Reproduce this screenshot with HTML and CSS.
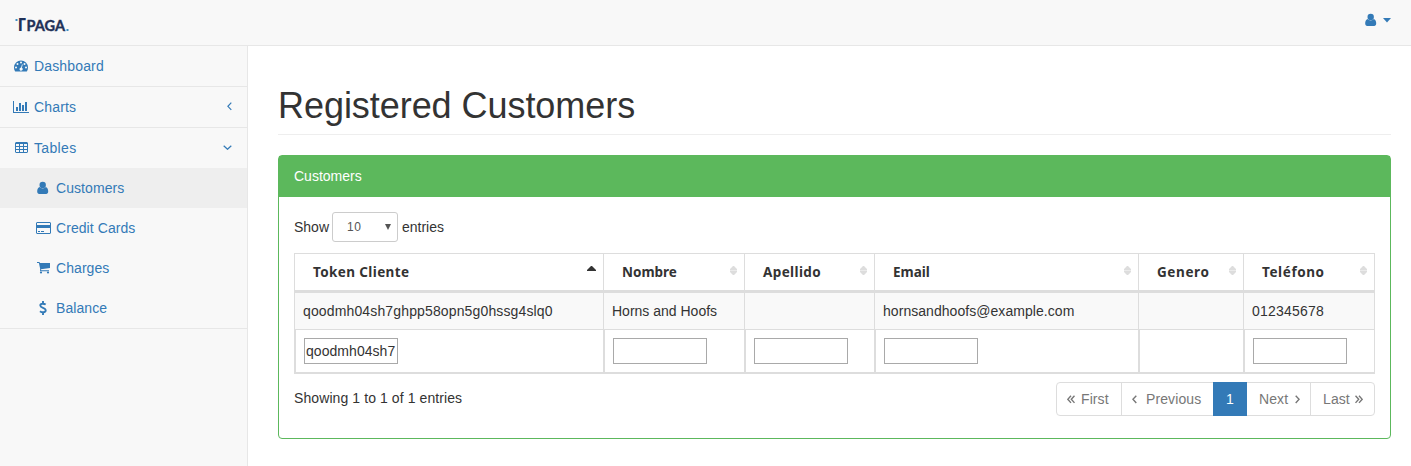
FILE: index.html
```html
<!DOCTYPE html>
<html lang="en">
<head>
<meta charset="utf-8">
<title>Registered Customers</title>
<link rel="stylesheet" href="styles.css">
</head>
<body>
<header class="navbar">
  <a class="brand">
    <svg width="60" height="20" viewBox="0 0 60 20">
      <rect x="0.5" y="3" width="2" height="2" fill="#3e8ec4"/>
      <text class="brand-t" x="2.400" y="15">Γ</text>
      <text class="brand-name" x="11.500" y="15" textLength="38.500" lengthAdjust="spacingAndGlyphs">PAGA</text>
      <rect x="51.500" y="13" width="2" height="2" fill="#3e8ec4"/>
    </svg>
  </a>
  <div class="user">
    <svg width="12" height="14" viewBox="0 0 12 14"><circle cx="5.700" cy="4" r="3.200"/><path d="M2.500 6C.8 6.600.2 8.300.2 10.600c0 1.500.8 2.400 2 2.400h7c1.200 0 2-.9 2-2.400 0-2.300-.6-4-2.300-4.600a4.400 4.400 0 0 1-6.400 0z"/></svg>
    <svg width="8" height="5" viewBox="0 0 8 5"><path d="M0 0h8L4 4.500z"/></svg>
  </div>
</header>
<div class="main">
  <nav class="sidebar">
    <a class="item"><span class="ico"><svg width="16" height="14" viewBox="0 0 16 14"><path fill-rule="evenodd" d="M8 1.500a7 7 0 0 0-7 7c0 1.400.3 2.600 1 3.700.2.300.4.300.6.300h10.800c.2 0 .4 0 .6-.3.700-1.100 1-2.300 1-3.700a7 7 0 0 0-7-7zM3 7.500a1 1 0 1 1 0 2 1 1 0 0 1 0-2zM4.500 4a1 1 0 1 1 0 2 1 1 0 0 1 0-2zM8 2.500a1 1 0 1 1 0 2 1 1 0 0 1 0-2zM11.500 4a1 1 0 1 1 0 2 1 1 0 0 1 0-2zM13 7.500a1 1 0 1 1 0 2 1 1 0 0 1 0-2zM9 5.300l.7.200-.8 3.200a1.600 1.600 0 1 1-.8-.2z"/></svg></span>Dashboard</a>
    <a class="item"><span class="ico"><svg width="16" height="12" viewBox="0 0 16 12"><path d="M0 0h1v11h15v1H0zM3 6h2v4H3zM6 2h2v8H6zM9 4h2v6H9zM12 1h2v9h-2z"/></svg></span>Charts<svg class="arrow" width="5" height="9" viewBox="0 0 5 9"><path d="M4.300.7.900 4.300l3.400 3.600"/></svg></a>
    <a class="item"><span class="ico"><svg class="grid" width="13" height="12" viewBox="0 0 13 12"><path fill-rule="evenodd" d="M1 0h11l1 1v9l-1 1H1l-1-1V1zM1 2v2h3V2zM5 2v2h3V2zM9 2v2h3V2zM1 5v2h3V5zM5 5v2h3V5zM9 5v2h3V5zM1 8v2h3V8zM5 8v2h3V8zM9 8v2h3V8z"/></svg></span>Tables<svg class="arrow" width="9" height="5" viewBox="0 0 9 5"><path d="M.7.700l3.800 3.600L8.300.7"/></svg></a>
    <div class="sub">
      <a class="subitem active"><span class="ico"><svg width="12" height="14" viewBox="0 0 12 14"><circle cx="5.700" cy="4" r="3.200"/><path d="M2.500 6C.8 6.600.2 8.300.2 10.600c0 1.500.8 2.400 2 2.400h7c1.200 0 2-.9 2-2.400 0-2.300-.6-4-2.300-4.600a4.400 4.400 0 0 1-6.400 0z"/></svg></span>Customers</a>
      <a class="subitem"><span class="ico"><svg width="15" height="12" viewBox="0 0 15 12"><path fill-rule="evenodd" d="M1 0h13l1 1v10l-1 1H1l-1-1V1zM1 1v2h13V1zM1 6v5h13V6zM2 9h2v1H2zM5 9h3v1H5z"/></svg></span>Credit Cards</a>
      <a class="subitem"><span class="ico"><svg width="13" height="12" viewBox="0 0 13 12"><path d="M0 0h2.500l.4 1H13v5L4 7.200l.1 1H12v1H3L3.200 7 1.900 1H0z"/><circle cx="4" cy="10.500" r="1.100"/><circle cx="11" cy="10.500" r="1.100"/></svg></span>Charges</a>
      <a class="subitem"><span class="ico"><svg width="8" height="14" viewBox="0 0 8 14"><path class="dollar" d="M6.700 3.600C5.500 2.700 1.300 1.900 1.300 4.400c0 2.800 5.400 2 5.400 4.900 0 2.600-4 2.300-5.700.9M4 0v2.500M4 11v3"/></svg></span>Balance</a>
    </div>
  </nav>
  <main class="page">
    <h1>Registered Customers</h1>
    <section class="panel">
      <div class="panel-head">Customers</div>
      <div class="panel-body">
        <div class="length"><span class="word">Show</span><span class="select">10<svg width="6" height="6" viewBox="0 0 6 6"><path d="M0 0h6L3 6z"/></svg></span><span class="word">entries</span></div>
        <table>
          <colgroup><col class="c1"><col class="c2"><col class="c3"><col class="c4"><col class="c5"><col class="c6"></colgroup>
          <thead><tr>
            <th>Token Cliente<svg class="sort asc" width="9" height="5" viewBox="0 0 9 5"><path d="M0 5V4L4 0h1l4 4v1z"/></svg></th>
            <th class="tight">Nombre<svg class="sort" width="7" height="9" viewBox="0 0 7 9"><path d="M0 4V3l3-3h1l3 3v1zM0 5h7v1L4 9H3L0 6z"/><path opacity=".6" d="M0 4h7v1H0z"/></svg></th>
            <th>Apellido<svg class="sort" width="7" height="9" viewBox="0 0 7 9"><path d="M0 4V3l3-3h1l3 3v1zM0 5h7v1L4 9H3L0 6z"/><path opacity=".6" d="M0 4h7v1H0z"/></svg></th>
            <th class="tight">Email<svg class="sort" width="7" height="9" viewBox="0 0 7 9"><path d="M0 4V3l3-3h1l3 3v1zM0 5h7v1L4 9H3L0 6z"/><path opacity=".6" d="M0 4h7v1H0z"/></svg></th>
            <th class="wide">Genero<svg class="sort" width="7" height="9" viewBox="0 0 7 9"><path d="M0 4V3l3-3h1l3 3v1zM0 5h7v1L4 9H3L0 6z"/><path opacity=".6" d="M0 4h7v1H0z"/></svg></th>
            <th class="wide">Teléfono<svg class="sort" width="7" height="9" viewBox="0 0 7 9"><path d="M0 4V3l3-3h1l3 3v1zM0 5h7v1L4 9H3L0 6z"/><path opacity=".6" d="M0 4h7v1H0z"/></svg></th>
          </tr></thead>
          <tbody><tr><td class="token">qoodmh04sh7ghpp58opn5g0hssg4slq0</td><td>Horns and Hoofs</td><td></td><td class="email">hornsandhoofs@example.com</td><td></td><td class="phone">012345678</td></tr></tbody>
          <tfoot><tr><td><input value="qoodmh04sh7"></td><td><input></td><td><input></td><td><input></td><td></td><td><input></td></tr></tfoot>
        </table>
        <div class="foot">
          <span class="info">Showing 1 to 1 of 1 entries</span>
          <div class="pager">
            <a class="first"><svg width="8" height="9" viewBox="0 0 8 9"><path d="M4 .7.800 4.300 4 7.900M7.500.7 4.300 4.300l3.200 3.600"/></svg>First</a>
            <a class="prev"><svg width="5" height="9" viewBox="0 0 5 9"><path d="M4.300.7.900 4.300l3.400 3.600"/></svg>Previous</a>
            <a class="current">1</a>
            <a class="next">Next<svg width="5" height="9" viewBox="0 0 5 9"><path d="M.7.700l3.400 3.600L.7 7.900"/></svg></a>
            <a class="last">Last<svg width="8" height="9" viewBox="0 0 8 9"><path d="M.5.700l3.200 3.600L.5 7.900M4 .7l3.200 3.600L4 7.900"/></svg></a>
          </div>
        </div>
      </div>
    </section>
  </main>
</div>
</body>
</html>
```
FILE: styles.css
```css
* { box-sizing: border-box; }
body { margin: 0; height: 466px; overflow: hidden; background: #f8f8f8; color: #333; font: 14px/20px "Liberation Sans", Arial, sans-serif; display: flex; flex-direction: column; }
svg { display: block; fill: currentColor; flex: none; }
.navbar { height: 46px; flex: none; border-bottom: 1px solid #e7e7e7; display: flex; justify-content: space-between; padding: 0 20px 0 15px; }
.brand { padding-top: 16px; }
.brand svg { overflow: visible; }
.brand text { fill: #1f3158; font-weight: 700; letter-spacing: 0; }
.brand-t { font-family: "Noto Sans", sans-serif; font-size: 17px; }
.brand-name { font-family: Lato, sans-serif; font-size: 14.5px; stroke: #1f3158; stroke-width: .4px; }
.user { display: flex; gap: 6px; color: #337ab7; padding-top: 13px; }
.user svg:last-child { margin-top: 5px; }
.main { flex: 1; display: flex; }
.sidebar { width: 247px; flex: none; color: #337ab7; }
.item { display: flex; align-items: center; height: 41px; border-bottom: 1px solid #e7e7e7; padding: 0 15px 0 13px; letter-spacing: .15px; }
.item:nth-child(3) { height: 40px; border-bottom: 0; letter-spacing: .35px; }
.ico { width: 16px; margin-right: 5px; display: flex; justify-content: center; flex: none; }
.arrow { margin-left: auto; margin-bottom: 2px; fill: none; stroke: currentColor; stroke-width: 1.2; }
.sub { border-bottom: 1px solid #e7e7e7; }
.subitem { display: flex; align-items: center; height: 40px; padding-left: 35px; letter-spacing: .07px; }
.subitem.active { background: #eee; }
.dollar { fill: none; stroke: currentColor; stroke-width: 1.9; }
.page { flex: 1; background: #fff; border-left: 1px solid #e7e7e7; padding: 40px 20px 0 30px; }
h1 { margin: 0 0 20px; height: 49px; border-bottom: 1px solid #eee; font-size: 36px; font-weight: 400; line-height: 40px; letter-spacing: -.05px; }
.panel { height: 284px; border: 1px solid #5cb85c; border-radius: 4px; }
.panel-head { height: 41px; background: #5cb85c; color: #fff; padding: 10px 15px 0; }
.panel-body { padding: 15px; }
.length { display: flex; align-items: center; height: 30px; gap: 4px; }
.word { padding-bottom: 1px; }
.word:first-child { width: 34px; }
.select { display: flex; align-items: center; justify-content: space-between; width: 66px; height: 30px; border: 1px solid #ccc; border-radius: 3px; padding: 0 6px 0 14px; font-size: 12px; color: #555; letter-spacing: .5px; }
table { width: 1081px; margin-top: 11px; table-layout: fixed; border-spacing: 0; border-right: 1px solid #ddd; }
.c1 { width: 309px; } .c2 { width: 141px; } .c3 { width: 130px; } .c4 { width: 264px; } .c5 { width: 105px; } .c6 { width: 131px; }
th, td { text-align: left; border-left: 1px solid #ddd; padding: 0 8px; }
th { position: relative; height: 40px; padding: 0 18px; border-top: 1px solid #ddd; border-bottom: 3px solid #ddd; font: 700 13.5px/20px "Noto Sans", sans-serif; letter-spacing: .38px; }
th.tight { letter-spacing: 0; }
th.wide { letter-spacing: .6px; }
.sort { position: absolute; right: 7px; top: 12px; color: #ddd; }
.asc { color: #333; right: 7px; }
tbody td { height: 37px; background: #f9f9f9; border-bottom: 1px solid #ddd; }
tfoot td { height: 44px; border-left-width: 2px; border-bottom: 2px solid #ddd; }
.token { letter-spacing: .14px; }
.phone { letter-spacing: .2px; }
.email { letter-spacing: .05px; }
input { display: block; width: 94px; height: 26px; border: 1px solid #a9a9a9; padding: 1px; font: 14px "Liberation Sans", sans-serif; letter-spacing: .05px; color: #333; }
.foot { display: flex; justify-content: space-between; padding-top: 8px; }
.info { padding-top: 6px; letter-spacing: .09px; }
.pager { display: flex; height: 34px; width: 319px; border: 1px solid #ddd; border-radius: 4px; color: #777; }
.pager a { display: flex; align-items: center; border-right: 1px solid #ddd; letter-spacing: .1px; }
.pager svg { fill: none; stroke: currentColor; stroke-width: 1.4; }
.first { width: 65px; padding-left: 10px; gap: 6px; }
.prev { width: 91px; padding-left: 10px; gap: 9px; }
.pager .prev { border-right: 0; }
.pager .current { width: 34px; margin: -1px 0; justify-content: center; background: #337ab7; color: #fff; border: 0; }
.next { width: 64px; padding-left: 12px; gap: 7px; }
.last { flex: 1; padding-left: 12px; gap: 5px; }
.pager .last { border: 0; }
```
